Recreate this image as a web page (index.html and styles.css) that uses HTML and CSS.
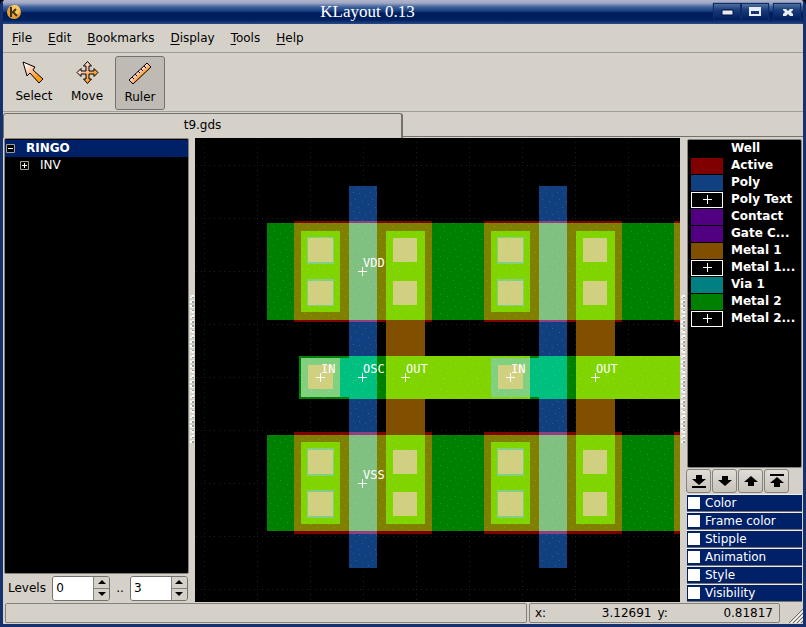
FILE: index.html
```html
<!DOCTYPE html>
<html lang="en">
<head>
    <meta charset="UTF-8">
    <meta name="viewport" content="width=device-width, initial-scale=1.0">
    <title>KLayout 0.13</title>
    <link rel="stylesheet" href="styles.css">
</head>
<body>
    <div class="window">
        <header class="titlebar">
            <svg class="logo" width="14" height="14" viewBox="0 0 14 14">
                <circle cx="7" cy="7" r="7" fill="#e8a028"/>
                <circle cx="8" cy="5" r="5" fill="#f8c860"/>
                <path d="M4 2v10M5 8l4-4M6 7l4 4" stroke="#403020" stroke-width="2" fill="none"/>
            </svg>
            <h1 class="title">KLayout 0.13</h1>
            <div class="window-buttons">
                <button class="window-button" aria-label="Minimize">
                    <svg width="26" height="16" viewBox="0 0 26 16"><path d="M8 6h11v5H8z" fill="#e8ecf4" stroke="#001040" stroke-width="1"/></svg>
                </button>
                <button class="window-button" aria-label="Maximize">
                    <svg width="26" height="16" viewBox="0 0 26 16"><path d="M7 3h12v9H7zM9 7v3h8V7z" fill="#e8ecf4" fill-rule="evenodd"/></svg>
                </button>
                <button class="window-button close-button" aria-label="Close">
                    <svg width="26" height="16" viewBox="0 0 26 16"><path d="M9 5h3l2 2 2-2h3v1l-2 2 2 2v2h-3l-2-2-2 2H9v-2l2-2-2-2z" fill="#e8ecf4"/></svg>
                </button>
            </div>
        </header>

        <nav class="menu">
            <a href="#"><u>F</u>ile</a>
            <a href="#"><u>E</u>dit</a>
            <a href="#"><u>B</u>ookmarks</a>
            <a href="#"><u>D</u>isplay</a>
            <a href="#"><u>T</u>ools</a>
            <a href="#"><u>H</u>elp</a>
        </nav>

        <div class="toolbar">
            <svg width="0" height="0" class="defs">
                <linearGradient id="orange" x1="0" y1="0" x2="1" y2="1">
                    <stop offset="0.1" stop-color="#fff"/>
                    <stop offset="0.45" stop-color="#ffb890"/>
                    <stop offset="0.75" stop-color="#ff9c10"/>
                </linearGradient>
                <linearGradient id="orange-ruler" x1="0.35" y1="0.35" x2="0.65" y2="0.65">
                    <stop offset="0" stop-color="#fff"/>
                    <stop offset="0.5" stop-color="#ffb890"/>
                    <stop offset="0.8" stop-color="#ff9c10"/>
                </linearGradient>
            </svg>
            <button class="tool">
                <svg width="24" height="24" viewBox="0 0 24 24"><path d="M1 2l12 5-2 3 10 9-4 4-9-10-3 3z" fill="url(#orange)" stroke="#000"/></svg>
                Select
            </button>
            <button class="tool">
                <svg width="24" height="24" viewBox="0 0 24 24"><path d="M12.500 1.500l4 4.500h-2.500v5h5V8.500l4 4-4 4V14h-5v5h2.500l-4 4.500-4-4.500H11v-5H6v2.500l-4-4 4-4V11h5V6H8.500z" fill="url(#orange)" stroke="#000"/></svg>
                Move
            </button>
            <button class="tool active">
                <svg width="24" height="24" viewBox="0 0 24 24"><path d="M1 19L19 2l4 4L5 23z" fill="url(#orange-ruler)" stroke="#000"/><path d="M4 16l2 2M7 13l2 2M10 10l2 2M13 8l2 2M16 5l2 2" stroke="#000"/></svg>
                Ruler
            </button>
        </div>

        <div class="tabs">
            <button class="tab">t9.gds</button>
            <div class="tab-rest"></div>
        </div>

        <main class="main">
            <section class="left">
                <ul class="tree">
                    <li class="cell selected"><button class="toggle" aria-label="Collapse"><svg width="9" height="9" viewBox="0 0 9 9"><path d="M0.5 0.5h8v8h-8z" fill="#000" stroke="#a0a098"/><path d="M2 4.500h5" stroke="#fff"/></svg></button>RINGO</li>
                    <li class="cell child"><button class="toggle" aria-label="Expand"><svg width="9" height="9" viewBox="0 0 9 9"><path d="M0.5 0.5h8v8h-8z" fill="#000" stroke="#a0a098"/><path d="M2 4.500h5M4.500 2v5" stroke="#fff"/></svg></button>INV</li>
                </ul>
                <div class="levels">
                    <label for="from">Levels</label>
                    <div class="spin">
                        <input id="from" type="text" value="0">
                        <div class="spin-buttons">
                            <button aria-label="Increase first level"><svg width="8" height="4" viewBox="0 0 8 4"><path d="M0 4l4-4 4 4z"/></svg></button>
                            <button aria-label="Decrease first level"><svg width="8" height="4" viewBox="0 0 8 4"><path d="M0 0l4 4 4-4z"/></svg></button>
                        </div>
                    </div>
                    <label class="dots" for="to">..</label>
                    <div class="spin">
                        <input id="to" type="text" value="3">
                        <div class="spin-buttons">
                            <button aria-label="Increase last level"><svg width="8" height="4" viewBox="0 0 8 4"><path d="M0 4l4-4 4 4z"/></svg></button>
                            <button aria-label="Decrease last level"><svg width="8" height="4" viewBox="0 0 8 4"><path d="M0 0l4 4 4-4z"/></svg></button>
                        </div>
                    </div>
                </div>
            </section>

            <div class="splitter"><div class="grip"></div></div>

            <section class="view">
                <svg class="canvas" viewBox="195 138 485 464" preserveAspectRatio="xMinYMin slice">
                    <defs>
                        <pattern id="grid" x="204" y="165" width="53" height="53" patternUnits="userSpaceOnUse">
                            <path d="M0 0.5h53" stroke="#202020" stroke-dasharray="1 4"/>
                            <path d="M0.5 0v53" stroke="#202020" stroke-dasharray="1 4"/>
                        </pattern>
                        <pattern id="specks" width="17" height="19" patternUnits="userSpaceOnUse">
                            <path d="M2 3h1v1h-1zM8 5h1v1h-1zM13 2h1v1h-1zM5 11h1v1h-1zM11 14h1v1h-1zM15 9h1v1h-1zM1 17h1v1h-1z" fill="#fff" fill-opacity="0.15"/>
                        </pattern>
                        <!-- one inverter, repeated every 190 units -->
                        <g id="inv" shape-rendering="crispEdges">
                            <!-- active -->
                            <path d="M294 221h138v101h-138zM294 432h138v102h-138z" fill="#800000"/>
                            <path d="M294 223h138v97h-138zM294 435h138v96h-138z" fill="#808000"/>
                            <!-- poly -->
                            <path d="M349 186h28v382h-28z" fill="#104080"/>
                            <path d="M349 221h28v101h-28zM349 432h28v102h-28z" fill="#904080"/>
                            <path d="M349 223h28v97h-28zM349 435h28v96h-28z" fill="#80c080"/>
                            <!-- metal 1 -->
                            <path d="M386 320h39v36h-39zM386 399h39v36h-39z" fill="#805000"/>
                            <path d="M301 231h39v81h-39zM386 231h39v89h-39zM301 442h39v82h-39zM386 435h39v89h-39z" fill="#80d400"/>
                            <!-- contacts -->
                            <path d="M307 237h27v27h-27zM307 279h27v27h-27zM307 448h27v28h-27zM307 490h27v28h-27z" fill="#80d080"/>
                            <path d="M308 238h25v24h-25zM308 281h25v24h-25zM308 450h25v24h-25zM308 492h25v24h-25zM393 238h24v24h-24zM393 281h24v24h-24zM393 450h24v24h-24zM393 492h24v24h-24z" fill="#d0d080"/>
                            <!-- gate connection -->
                            <path d="M340 356h46v43h-46z" fill="#008000"/>
                            <path d="M340 358h9v-2h28v43h-28v-2h-9z" fill="#00c080"/>
                            <path d="M301 358h39v39h-39z" fill="#80d080"/>
                            <path d="M308 365h25v24h-25z" fill="#d0d080"/>
                        </g>
                    </defs>
                    <rect x="195" y="138" width="485" height="464" fill="#000"/>
                    <rect x="195" y="138" width="485" height="464" fill="url(#grid)" shape-rendering="crispEdges"/>
                    <g shape-rendering="crispEdges">
                        <path d="M267 223h413v97H267zM267 435h413v96H267zM299 356h381v43H299z" fill="#008000"/>
                        <path d="M386 356h294v43H386z" fill="#80d400"/>
                        <use href="#inv"/>
                        <use href="#inv" x="190"/>
                        <use href="#inv" x="380"/>
                        <path d="M267 223h413v97H267zM267 435h413v96H267zM299 356h381v43H299zM349 186h28v35h-28zM539 186h28v35h-28zM349 322h28v34h-28zM539 322h28v34h-28zM349 399h28v33h-28zM539 399h28v33h-28zM349 534h28v34h-28zM539 534h28v34h-28z" fill="url(#specks)"/>
                    </g>
                    <path class="cross" d="M358 271.500h9M362.500 267v9M316 377.500h9M320.500 373v9M358 377.500h9M362.500 373v9M401 377.500h9M405.500 373v9M506 377.500h9M510.500 373v9M591 377.500h9M595.500 373v9M358 483.500h9M362.500 479v9"/>
                    <g class="net">
                        <text x="363" y="267">VDD</text>
                        <text x="321" y="373">IN</text>
                        <text x="363" y="373">OSC</text>
                        <text x="406" y="373">OUT</text>
                        <text x="511" y="373">IN</text>
                        <text x="596" y="373">OUT</text>
                        <text x="363" y="479">VSS</text>
                    </g>
                </svg>
            </section>

            <div class="splitter"><div class="grip"></div></div>

            <section class="right">
                <ul class="layers">
                    <li><span class="swatch"></span>Well</li>
                    <li><span class="swatch active-layer"></span>Active</li>
                    <li><span class="swatch poly"></span>Poly</li>
                    <li><span class="swatch text"></span>Poly Text</li>
                    <li><span class="swatch contact"></span>Contact</li>
                    <li><span class="swatch contact"></span>Gate C...</li>
                    <li><span class="swatch metal1"></span>Metal 1</li>
                    <li><span class="swatch text"></span>Metal 1...</li>
                    <li><span class="swatch via"></span>Via 1</li>
                    <li><span class="swatch metal2"></span>Metal 2</li>
                    <li><span class="swatch text"></span>Metal 2...</li>
                </ul>
                <div class="order">
                    <button aria-label="To bottom"><svg width="14" height="14" viewBox="0 0 14 14"><path d="M4 1h6v4h4l-7 6-7-6h4zM0 12h14v2H0z"/></svg></button>
                    <button aria-label="Down"><svg width="14" height="14" viewBox="0 0 14 14"><path d="M4 2h6v4h4l-7 6-7-6h4z"/></svg></button>
                    <button aria-label="Up"><svg width="14" height="14" viewBox="0 0 14 14"><path d="M4 12h6V8h4L7 2 0 8h4z"/></svg></button>
                    <button aria-label="To top"><svg width="14" height="14" viewBox="0 0 14 14"><path d="M4 13h6V9h4L7 3 0 9h4zM0 0h14v2H0z"/></svg></button>
                </div>
                <div class="options">
                    <label><input type="checkbox">Color</label>
                    <label><input type="checkbox">Frame color</label>
                    <label><input type="checkbox">Stipple</label>
                    <label><input type="checkbox">Animation</label>
                    <label><input type="checkbox">Style</label>
                    <label><input type="checkbox">Visibility</label>
                </div>
            </section>
        </main>

        <footer class="status">
            <div class="message"></div>
            <div class="position">
                <span>x:</span><span class="value">3.12691</span>
                <span>y:</span><span class="value">0.81817</span>
            </div>
            <svg class="resize" width="14" height="14" viewBox="0 0 14 14"><path d="M0 14L14 0M4 14L14 4M8 14l6-6M12 14l2-2" stroke="#706e68"/><path d="M2 14L14 2M6 14l8-8M10 14l4-4" stroke="#fff"/></svg>
        </footer>
    </div>
</body>
</html>
```
FILE: styles.css
```css
* {
    box-sizing: border-box;
}
body {
    margin: 0;
    background-color: #000;
    font-family: "DejaVu Sans", sans-serif;
    font-size: 12px;
    line-height: 17px;
    color: #000;
}
button, input {
    font: inherit;
    color: inherit;
    margin: 0;
    padding: 0;
}
ul {
    list-style: none;
    margin: 0;
    padding: 0;
}
svg {
    display: block;
}
.window {
    display: flex;
    flex-direction: column;
    height: 100vh;
    background-color: #d5d1c9;
    border: solid #16306e;
    border-width: 0 3px 3px;
    border-radius: 5px 5px 0 0;
    overflow: hidden;
}

/* title bar */
.titlebar {
    display: flex;
    align-items: center;
    height: 24px;
    flex: none;
    margin: 0 -3px;
    padding: 0 6px 0 7px;
    background: linear-gradient(#b0b4cc 0, #a0a8c4 3px, #3c609c 7px, #184080 11px, #001c5c 13px, #002060 20px, #284888 24px);
}
.title {
    flex: 1;
    margin: 0;
    font: 17px/24px "Liberation Serif", serif;
    color: #fff;
    text-align: center;
}
.window-buttons {
    display: flex;
    gap: 2px;
}
.window-button {
    width: 26px;
    height: 16px;
    border: 0;
    background: linear-gradient(#50709c, #183c7c 6px, #001c5c);
    box-shadow: 0 0 1px 1px #102c68;
}
.close-button {
    margin-left: 4px;
}

/* menu and tools */
.menu {
    display: flex;
    gap: 16px;
    height: 29px;
    flex: none;
    padding: 6px 9px;
    border-bottom: 1px solid #a09e98;
}
.menu a {
    color: #000;
    text-decoration: none;
}
.menu u {
    text-underline-offset: 2px;
}
.toolbar {
    display: flex;
    gap: 3px;
    height: 59px;
    flex: none;
    padding: 3px 6px 1px;
    border-bottom: 1px solid #a09e98;
}
.defs {
    position: absolute;
}
.tool {
    display: flex;
    flex-direction: column;
    align-items: center;
    gap: 4px;
    width: 50px;
    height: 54px;
    padding-top: 3px;
    background: none;
    border: 1px solid transparent;
    border-radius: 3px;
}
.active {
    background-color: #bfbbb4;
    border-color: #74726c;
    padding-top: 4px;
}

/* tabs */
.tabs {
    display: flex;
    height: 26px;
    flex: none;
    padding-top: 1px;
}
.tab {
    width: 50%;
    padding-bottom: 2px;
    border: 1px solid #74726c;
    border-width: 1px 2px 0 1px;
    border-radius: 3px 3px 0 0;
    background: none;
}
.tab-rest {
    flex: 1;
    margin-bottom: 1px;
    border-bottom: 1px solid #74726c;
}

/* work area */
.main {
    display: flex;
    flex: 1;
    min-height: 0;
}
.left {
    display: flex;
    flex-direction: column;
    width: 186px;
}
.tree {
    flex: 1;
    margin-left: 1px;
    padding-top: 1px;
    border: 1px solid #84827c;
    border-radius: 2px;
    background-color: #000;
    color: #fff;
}
.cell {
    display: flex;
    align-items: center;
    gap: 11px;
    height: 17px;
    padding-left: 1px;
}
.selected {
    background-color: #002068;
    font-weight: bold;
}
.child {
    padding-left: 15px;
}
.toggle {
    border: 0;
    background: none;
}
.levels {
    display: flex;
    align-items: center;
    height: 28px;
    padding: 0 1px 0 5px;
}
.spin {
    display: flex;
    width: 58px;
    height: 25px;
    margin-left: auto;
    border: 1px solid #74726c;
    border-radius: 3px;
    overflow: hidden;
}
.spin input {
    flex: 1;
    min-width: 0;
    padding-left: 3px;
    border: 0;
    background-color: #fff;
}
.spin-buttons {
    display: flex;
    flex-direction: column;
    width: 16px;
}
.spin-buttons button {
    display: flex;
    flex: 1;
    align-items: center;
    justify-content: center;
    border: solid #84827c;
    border-width: 0 0 0 1px;
    background-color: #d5d1c9;
}
.spin-buttons button + button {
    border-top-width: 1px;
}
.dots {
    margin-left: 6px;
}
.splitter {
    display: flex;
    align-items: center;
    justify-content: center;
    width: 6px;
}
/* raised dots of the drag handle */
.grip {
    width: 4px;
    height: 150px;
    background: conic-gradient(#fff 25%, #a09e98 0 50%, #fff 0 75%, #e8e6e0 0) 0 0 / 4px 4px;
    mask: repeating-linear-gradient(#000 0 3px, transparent 3px 5px);
}
.view {
    flex: 1;
    min-width: 0;
    background-color: #000;
    overflow: hidden;
}
.canvas {
    width: 100%;
    height: 100%;
}
.cross {
    stroke: #fff;
    fill: none;
    shape-rendering: crispEdges;
}
.net {
    font-family: "DejaVu Sans Mono", monospace;
    font-size: 12px;
    fill: #fff;
}

/* layers */
.right {
    display: flex;
    flex-direction: column;
    width: 117px;
    padding-right: 1px;
}
.layers {
    flex: 1;
    margin: 1px 0 0 1px;
    border: 1px solid #84827c;
    border-radius: 2px;
    background-color: #000;
    color: #fff;
    font-weight: bold;
}
.layers li {
    display: flex;
    align-items: center;
    gap: 8px;
    height: 17px;
    padding-left: 3px;
    white-space: nowrap;
}
.swatch {
    width: 32px;
    height: 16px;
}
.active-layer {
    background-color: #800000;
}
.poly {
    background-color: #104080;
}
.contact {
    background-color: #500080;
}
.metal1 {
    background-color: #805000;
}
.via {
    background-color: #008080;
}
.metal2 {
    background-color: #008000;
}
.text {
    border: 1px solid #fff;
    background: linear-gradient(#fff, #fff) center / 9px 1px no-repeat, linear-gradient(#fff, #fff) center / 1px 9px no-repeat;
}
.order {
    display: flex;
    gap: 1px;
    height: 26px;
    padding-top: 1px;
}
.order button {
    display: flex;
    align-items: center;
    justify-content: center;
    width: 25px;
    height: 24px;
    border: 1px solid #84827c;
    border-radius: 3px;
    background: linear-gradient(#e0dcd6, #c8c4bc);
}
.options {
    margin-left: 1px;
}
.options label {
    display: flex;
    align-items: center;
    gap: 5px;
    height: 18px;
    padding-left: 1px;
    border: solid #f0eee8;
    border-width: 1px 0 1px;
    border-bottom-color: #74726c;
    background-color: #002068;
    color: #fff;
}
.options input {
    appearance: none;
    width: 12px;
    height: 12px;
    background-color: #fff;
}

/* status bar */
.status {
    display: flex;
    gap: 2px;
    height: 22px;
    flex: none;
    padding: 1px 0 1px 2px;
}
.message {
    flex: 1;
    border: 1px solid #84827c;
    border-radius: 2px;
}
.position {
    display: flex;
    width: 251px;
    padding: 1px 6px 0 5px;
    border: 1px solid #84827c;
    border-radius: 2px;
}
.value {
    flex: 1;
    padding-right: 6px;
    text-align: right;
}
.value:last-child {
    padding-right: 0;
}
.resize {
    align-self: flex-end;
    margin-left: 7px;
}
```
